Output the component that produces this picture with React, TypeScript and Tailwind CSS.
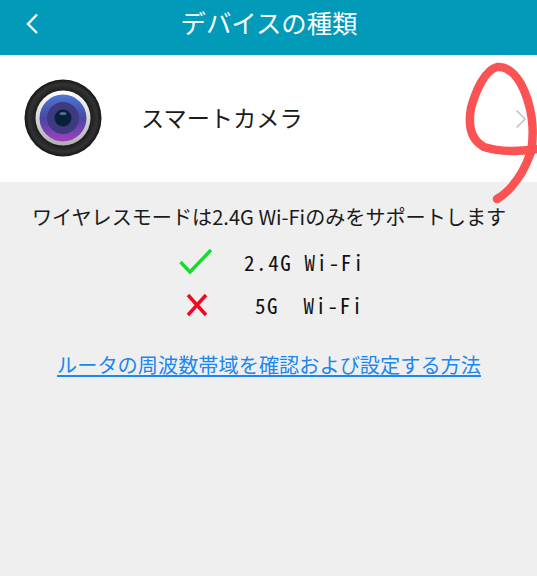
const jp = '[font-family:"Noto_Sans_CJK_JP","Noto_Sans",sans-serif]';

function Lens() {
  return (
    <svg width="78" height="78" viewBox="0 0 78 78">
      <defs>
        <radialGradient id="rim" cx="50%" cy="50%" r="50%">
          <stop offset="70%" stopColor="#1c1c1c" />
          <stop offset="88%" stopColor="#333333" />
          <stop offset="100%" stopColor="#151515" />
        </radialGradient>
        <linearGradient id="glass" x1="0" y1="0" x2="0" y2="1">
          <stop offset="0%" stopColor="#4f77d6" />
          <stop offset="50%" stopColor="#4648a0" />
          <stop offset="100%" stopColor="#a33fc0" />
        </linearGradient>
        <linearGradient id="ring" x1="0" y1="0" x2="0" y2="1">
          <stop offset="0%" stopColor="#ffffff" />
          <stop offset="100%" stopColor="#b0b0b0" />
        </linearGradient>
      </defs>
      <circle cx="39" cy="39" r="38.5" fill="url(#rim)" />
      <circle cx="39" cy="39" r="27.5" fill="url(#ring)" />
      <circle cx="39" cy="39" r="23.5" fill="url(#glass)" />
      <circle cx="39" cy="39" r="16" fill="#3d3a80" />
      <circle cx="39" cy="39" r="8.5" fill="#0a1f38" />
      <ellipse cx="39" cy="34.5" rx="3.5" ry="1.6" fill="#4f6f96" />
    </svg>
  );
}

export default function App() {
  return (
    <div className={`relative w-[537px] h-[576px] overflow-hidden bg-[#efefef] ${jp}`}>
      <header className="h-[55px] bg-[#019ab9] flex items-start relative text-white">
        <svg className="ml-[24px] mt-[12px]" width="17" height="24" viewBox="0 0 17 24">
          <path d="M13 2.5 L4 12 L13 21" fill="none" stroke="#ffffff" strokeWidth="2.4" />
        </svg>
        <h1 className="absolute left-0 right-0 top-0 pl-[1px] text-center text-[25.4px] leading-[44px]">デバイスの種類</h1>
      </header>

      <div className="h-[127px] bg-white flex items-center pl-[24px] pr-[10px]">
        <div className="mb-[1px] flex"><Lens /></div>
        <span className="ml-[39px] flex-1 text-[23.2px] leading-[30px] mb-[3px] text-[#1a1a1a]">スマートカメラ</span>
        <svg width="12" height="20" viewBox="0 0 12 20">
          <path d="M1.5 1.5 L10 10 L1.5 18.5" fill="none" stroke="#c4c4c4" strokeWidth="1.6" />
        </svg>
      </div>

      <p className="mt-[21px] pl-[1px] text-center text-[20.1px] leading-[28px] whitespace-nowrap text-[#1a1a1a]">ワイヤレスモードは2.4G Wi-Fiのみをサポートします</p>

      <div className="mt-[17px] flex flex-col gap-[15px] text-[#111] text-[21px] leading-[28px] tracking-[1.6px] [font-feature-settings:'hwid']">
        <div className="flex items-center h-[28px]">
          <svg className="ml-[179px]" width="34" height="28" viewBox="0 0 34 28">
            <path d="M1.5 14 L11 24 L32 2" fill="none" stroke="#14dc2a" strokeWidth="3.4" />
          </svg>
          <span className="ml-[31px] whitespace-pre">2.4G Wi-Fi</span>
        </div>
        <div className="flex items-center h-[28px]">
          <svg className="ml-[186px]" width="22" height="24" viewBox="0 0 22 24">
            <path d="M2 2 L20 22 M20 2 L2 22" fill="none" stroke="#f5061e" strokeWidth="3.4" />
          </svg>
          <span className="ml-[47px] whitespace-pre">5G  Wi-Fi</span>
        </div>
      </div>

      <a className="block mt-[31px] pl-[1px] text-center text-[20.2px] leading-[30px] text-[#1b87f0] underline">ルータの周波数帯域を確認および設定する方法</a>

      <svg className="absolute left-0 top-0 pointer-events-none" width="537" height="576" viewBox="0 0 537 576">
        <path
          d="M497 199 C512 190 524 172 531 152 C535 130 532 105 521 84 C514 72 506 66 497 67 C485 70 476 90 471 108 C468 125 471 140 484 147 C500 152 518 152 536 149"
          fill="none"
          stroke="#fb5353"
          strokeWidth="8.5"
          strokeLinecap="round"
          strokeLinejoin="round"
        />
      </svg>
    </div>
  );
}
